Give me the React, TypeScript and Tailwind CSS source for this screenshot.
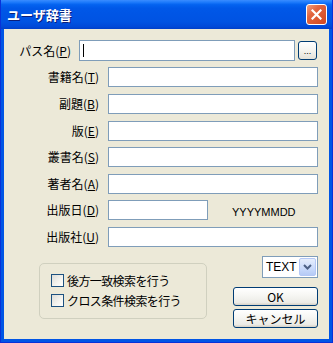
import React from "react";

const jp = { fontFamily: '"Noto Sans CJK JP", "Noto Sans", sans-serif' };

function Label({ text, m, width }: { text: string; m: string; width: number }) {
  return (
    <div
      className="text-right text-[12px] leading-none text-black shrink-0"
      style={{ ...jp, width }}
    >
      {text}(<span className="underline">{m}</span>)
    </div>
  );
}

function Field({ w }: { w: number }) {
  return <div className="h-[20px] bg-white border border-[#7F9DB9] shrink-0" style={{ width: w }} />;
}

function Row({ text, m, mt, children }: { text: string; m: string; mt: number; children?: React.ReactNode }) {
  return (
    <div className="flex items-center" style={{ marginTop: mt }}>
      <Label text={text} m={m} width={95} />
      <div className="ml-[9px] flex items-center">{children ?? <Field w={210} />}</div>
    </div>
  );
}

function Check({ text }: { text: string }) {
  return (
    <div className="flex items-center h-[13px]">
      <div className="w-[13px] h-[13px] border border-[#1C5180] bg-[linear-gradient(135deg,#DCDCD7_0%,#F4F4F0_60%,#FFFFFF_100%)]" />
      <span className="ml-[3px] text-[12px] leading-none text-black tracking-[-0.6px]" style={jp}>
        {text}
      </span>
    </div>
  );
}

function XpButton({ children }: { children: React.ReactNode }) {
  return (
    <div className="w-[85px] h-[19px] rounded-[3px] border border-[#003C74] bg-[linear-gradient(180deg,#FFFFFF_0%,#F7F7F4_40%,#ECEBE6_85%,#D6D0C5_100%)] flex items-center justify-center text-[12px] leading-none text-black" style={jp}>
      {children}
    </div>
  );
}

export default function App() {
  return (
    <div className="w-[333px] h-[343px] flex flex-col bg-[#0055E5] border-l border-r border-b border-[#0831D9] overflow-hidden">
      <div className="h-[29px] shrink-0 flex items-center bg-[linear-gradient(180deg,#3A8CFF_0%,#1D7AFB_8%,#0463F0_16%,#0058E8_28%,#0055E5_50%,#0053E2_75%,#0049D8_92%,#003FC8_100%)] pl-[6px] pr-[5px]">
        <span className="text-white text-[13px] font-bold leading-none [text-shadow:1px_1px_0_#0A1E7A]" style={jp}>
          ユーザ辞書
        </span>
        <div className="ml-auto w-[21px] h-[21px] rounded-[3px] border border-white bg-[linear-gradient(135deg,#F0A080_0%,#E2653F_35%,#D1471F_100%)] flex items-center justify-center">
          <svg width="11" height="11" viewBox="0 0 11 11">
            <path d="M1.5 1.5 L9.5 9.5 M9.5 1.5 L1.5 9.5" stroke="white" strokeWidth="2.2" strokeLinecap="square" />
          </svg>
        </div>
      </div>
      <div className="flex-1 mx-[3px] mb-[3px] bg-[#ECE9D8] flex flex-col">
        <div className="flex items-center mt-[11px]">
          <Label text="パス名" m="P" width={67} />
          <div className="ml-[8px] w-[216px] h-[21px] bg-white border border-[#7F9DB9] flex items-center pl-[3px]">
            <div className="w-px h-[13px] bg-black" />
          </div>
          <div className="ml-[3px] w-[19px] h-[19px] rounded-[3px] border border-[#003C74] bg-[linear-gradient(180deg,#FFFFFF_0%,#F5F4EF_50%,#E3E1D8_100%)] flex items-end justify-center pb-[3px] text-[9px] leading-none text-black" style={{ fontFamily: '"Liberation Sans", sans-serif' }}>
            ...
          </div>
        </div>
        <Row text="書籍名" m="T" mt={6} />
        <Row text="副題" m="B" mt={7} />
        <Row text="版" m="E" mt={7} />
        <Row text="叢書名" m="S" mt={6} />
        <Row text="著者名" m="A" mt={7} />
        <Row text="出版日" m="D" mt={6}>
          <Field w={100} />
          <span className="ml-[24px] mt-[4px] text-[11px] leading-none text-black" style={{ fontFamily: '"Liberation Sans", Arial, sans-serif' }}>
            YYYYMMDD
          </span>
        </Row>
        <Row text="出版社" m="U" mt={7} />

        <div className="flex mt-[9px]">
          <div className="ml-[35px] mt-[7px] w-[168px] h-[56px] rounded-[5px] border border-[#D0D0BF] pl-[11px] pt-[10px] flex flex-col gap-[7px]">
            <Check text="後方一致検索を行う" />
            <Check text="クロス条件検索を行う" />
          </div>
          <div className="ml-auto mr-[11px] flex flex-col items-end">
            <div className="w-[56px] h-[22px] bg-white border border-[#7F9DB9] flex items-center">
              <span className="pl-[3px] text-[12px] leading-none text-black" style={{ fontFamily: '"Liberation Sans", Arial, sans-serif' }}>
                TEXT
              </span>
              <div className="ml-auto mr-px w-[17px] h-[18px] rounded-[2px] border border-[#B4C8F6] bg-[linear-gradient(180deg,#E6EEFC_0%,#C9DAFB_60%,#B6CAF5_100%)] flex items-center justify-center">
                <svg width="9" height="6" viewBox="0 0 9 6">
                  <path d="M1 1 L4.5 4.5 L8 1" stroke="#4D6185" strokeWidth="2" fill="none" />
                </svg>
              </div>
            </div>
            <div className="mt-[9px]">
              <XpButton>OK</XpButton>
            </div>
            <div className="mt-[3px]">
              <XpButton>キャンセル</XpButton>
            </div>
          </div>
        </div>
      </div>
    </div>
  );
}
